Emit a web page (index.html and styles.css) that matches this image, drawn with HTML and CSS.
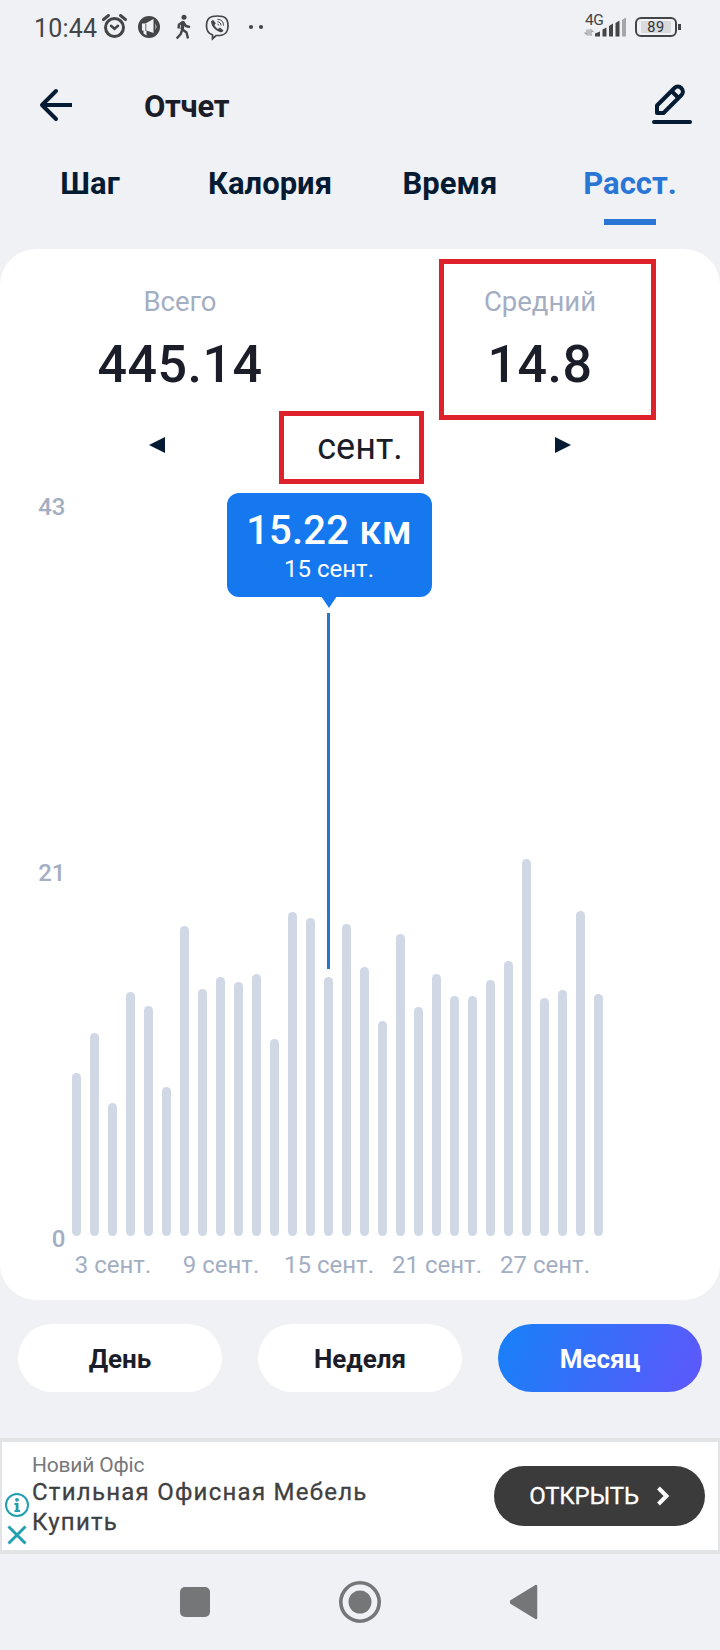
FILE: index.html
```
<!DOCTYPE html>
<html lang="ru">
<head>
  <meta charset="UTF-8" />
  <meta name="viewport" content="width=device-width, initial-scale=1.0"/>
  <title>Отчет</title>
  <link rel="stylesheet" href="styles.css">
</head>
<body>

<div class="status-bar">
  <span class="clock">10:44</span>
  <svg class="status-icons" width="164" height="30" viewBox="100 12 164 30">
    <!-- alarm -->
    <g fill="none" stroke="#434547" stroke-linecap="round">
      <circle cx="114.500" cy="27.500" r="9" stroke-width="3"/>
      <path d="M103.500 19.500l5-4M125.500 19.500l-5-4" stroke-width="3"/>
      <path d="M111 25.800l3.500 3 3.500-3" stroke-width="2.500"/>
    </g>
    <!-- megaphone -->
    <circle cx="149" cy="27" r="11" fill="#434547"/>
    <path d="M142 23.500h3.500l8-4.500v14l-7-2.500v5l-3-2v-3h-1.500zM155.500 23q1.800 3.500 0 7z" fill="#f0f1f5"/>
    <path d="M145.800 24v7" stroke="#434547" stroke-width=".8"/>
    <!-- walking -->
    <circle cx="184" cy="17.200" r="2.500" fill="#434547"/>
    <path d="M183.500 22l-1 7.500 4 3 1.500 6M182.500 29l-1.800 5-4 4.500M178.500 28.500l.5-4 4-2.500 3 4 4 1.200" fill="none" stroke="#434547" stroke-width="2.400" stroke-linejoin="round"/>
    <path d="M183.300 21.500l-1.200 8" stroke="#434547" stroke-width="3.500"/>
    <!-- viber -->
    <path d="M217.500 16c7.500 0 10.500 2.500 10.500 9.800 0 7-3 9.700-10.500 9.700h-1.500l-3.500 3.200v-3.900c-4.500-1.200-6-4-6-9 0-7.300 3.500-9.800 11-9.800z" fill="none" stroke="#434547" stroke-width="1.700"/>
    <path d="M211 21.500l2-1.800 2.800 3.500-1.300 1.800c.8 2 1.800 3 3.600 3.900l1.700-1.300 3.500 2.600c-.4 2-1.700 2.300-3.400 1.700-4.900-1.800-8.200-5.100-8.900-10.400z" fill="#434547"/>
    <path d="M217.500 19.300c4 .2 6 2.500 6 6.300M217.500 21.800c2.300.2 3.500 1.500 3.600 3.700M217.500 24c.8.100 1.200.6 1.300 1.400" fill="none" stroke="#434547"/>
    <circle cx="251" cy="27" r="2.100" fill="#434547"/>
    <circle cx="261" cy="27" r="2.100" fill="#434547"/>
  </svg>
  <div class="signal">
    <span class="network">4G</span>
    <svg width="44" height="24" viewBox="584 15 44 24">
      <path d="M584.500 32.500l2.500 2v-5M593.500 32l-2.500-2v6M589 29.500v6" fill="none" stroke="#a5a6a9" stroke-width="1.400"/>
      <path d="M595 36.500v-3l5-2v5zM602.500 36.500v-7l4-2v9zM609 36.500v-10.500l4-2.500v13zM615.500 36.500v-13.500l4-2.500v16z" fill="#434547"/>
      <path d="M622 36.500v-16.500l4-2.500v19z" fill="#a5a6a9"/>
    </svg>
  </div>
  <div class="battery"><span>89</span></div>
</div>

<header class="header">
  <svg width="34" height="34" viewBox="0 0 34 34" fill="none" stroke="#041b33" stroke-width="4">
    <path d="M3 17h30"/>
    <path d="M17 3L3 17l14 14" stroke-linecap="round" stroke-linejoin="round"/>
  </svg>
  <h1>Отчет</h1>
  <svg class="edit" width="42" height="42" viewBox="651 84 42 42" fill="none" stroke="#041b33" stroke-linejoin="round">
    <path d="M657 113v-7.500l17.500-17.500a4.700 4.700 0 0 1 6.700 0l.3.300a4.700 4.700 0 0 1 0 6.700L663.500 113zM671.500 91l7 7" stroke-width="4"/>
    <path d="M654 122h36" stroke-width="4" stroke-linecap="round"/>
  </svg>
</header>

<nav class="tabs">
  <a>Шаг</a>
  <a>Калория</a>
  <a>Время</a>
  <a class="active">Расст.</a>
</nav>

<main class="card">
  <div class="stats">
    <div class="stat">
      <div class="stat-label">Всего</div>
      <div class="stat-value">445.14</div>
    </div>
    <div class="stat">
      <div class="stat-label">Средний</div>
      <div class="stat-value">14.8</div>
    </div>
  </div>

  <div class="month">
    <svg width="16" height="16" viewBox="0 0 16 16"><path d="M0 8L16 0v16z" fill="#041b33"/></svg>
    <span>сент.</span>
    <svg width="16" height="16" viewBox="0 0 16 16"><path d="M16 8L0 0v16z" fill="#041b33"/></svg>
  </div>

  <div class="chart">
    <div class="y-axis">
      <span>43</span>
      <span>21</span>
      <span>0</span>
    </div>
    <div class="plot">
      <div class="bars" id="bars"></div>
      <div class="marker"></div>
      <div class="tooltip">
        <div class="tooltip-value">15.22 км</div>
        <div class="tooltip-date">15 сент.</div>
      </div>
    </div>
  </div>
  <div class="x-axis">
    <span>3 сент.</span>
    <span>9 сент.</span>
    <span>15 сент.</span>
    <span>21 сент.</span>
    <span>27 сент.</span>
  </div>

  <div class="mark mark-average"></div>
  <div class="mark mark-month"></div>
</main>

<div class="periods">
  <button>День</button>
  <button>Неделя</button>
  <button class="active">Месяц</button>
</div>

<div class="ad">
  <div class="ad-icons">
    <svg width="24" height="24" viewBox="0 0 24 24">
      <circle cx="12" cy="12" r="11" fill="none" stroke="#229fb0" stroke-width="2"/>
      <path d="M9.500 10h4v7h1.500v2h-5.500v-2h1.200v-5h-1.200z" fill="#229fb0"/>
      <circle cx="12" cy="6.800" r="1.900" fill="#229fb0"/>
    </svg>
    <svg width="20" height="20" viewBox="0 0 20 20"><path d="M1.500 1.500l17 17M18.500 1.500l-17 17" stroke="#229fb0" stroke-width="3"/></svg>
  </div>
  <div class="ad-text">
    <div class="ad-brand">Новий Офіс</div>
    <div class="ad-title">Стильная Офисная Мебель<br>Купить</div>
  </div>
  <div class="ad-button">
    <span>ОТКРЫТЬ</span>
    <svg width="14" height="20" viewBox="0 0 14 20"><path d="M2.500 2l8 8-8 8" fill="none" stroke="#fff" stroke-width="4"/></svg>
  </div>
</div>

<div class="navbar">
  <svg width="30" height="30" viewBox="0 0 30 30"><rect width="30" height="30" rx="5" fill="#757678"/></svg>
  <svg width="42" height="42" viewBox="0 0 42 42">
    <circle cx="21" cy="21" r="19.200" fill="none" stroke="#757678" stroke-width="3.600"/>
    <circle cx="21" cy="21" r="11.500" fill="#757678"/>
  </svg>
  <svg width="30" height="36" viewBox="2 0 30 36"><path d="M2 18L28 2v32z" fill="#757678" stroke="#757678" stroke-width="2.500" stroke-linejoin="round"/></svg>
</div>

<script>
  // bar heights in px, one per day
  const days = [
    162.7, 202.7, 133, 244, 230.3, 149, 310, 246.7, 259.3, 254.3,
    261.7, 197, 324, 317.7, 259.3, 312, 268.7, 215.3, 301.7, 229,
    262.3, 240.3, 240.3, 256, 274.7, 376.7, 237.7, 246, 325, 241.7
  ];

  const bars = document.getElementById("bars");
  days.forEach(h => {
    const bar = document.createElement("div");
    bar.className = "bar";
    bar.style.height = h + "px";
    bars.appendChild(bar);
  });
</script>

</body>
</html>
```
FILE: styles.css
```
* {
  box-sizing: border-box;
}

body {
  margin: 0;
  width: 720px;
  height: 1650px;
  font-family: Roboto, "Liberation Sans", sans-serif;
  background: #f0f1f5;
  color: #1b1d29;
  overflow: hidden;
}

svg {
  display: block;
  flex-shrink: 0;
}

.status-bar {
  display: flex;
  align-items: center;
  height: 54px;
  padding-left: 34px;
}

.clock {
  width: 66px;
  font-size: 25px;
  line-height: 30px;
  padding-top: 3px;
  letter-spacing: 0.2px;
  color: #434547;
}

.signal {
  position: relative;
  margin-left: 320px;
}

.network {
  position: absolute;
  left: 1px;
  top: -4px;
  font-size: 15.5px;
  line-height: 18px;
  letter-spacing: -0.5px;
  color: #434547;
}

.battery {
  position: relative;
  width: 42px;
  height: 20px;
  margin-left: 7px;
  padding: 2px 4px;
  border: 2px solid #434547;
  border-radius: 6px;
}

.battery::after {
  content: "";
  position: absolute;
  right: -6px;
  top: 5px;
  width: 3px;
  height: 6px;
  background: #434547;
}

.battery span {
  display: block;
  height: 12px;
  background: #d9dadc;
  font-size: 14.5px;
  line-height: 14px;
  letter-spacing: 0.5px;
  text-align: center;
  color: #333;
}

.header {
  display: flex;
  align-items: center;
  height: 102px;
  padding: 0 27px 0 39px;
}

.header h1 {
  margin: 0 0 0 71px;
  padding-top: 3px;
  font-size: 31px;
  line-height: 40px;
  font-weight: 700;
  letter-spacing: -0.3px;
}

.edit {
  margin-left: auto;
}

.tabs {
  display: grid;
  grid-template-columns: repeat(4, 180px);
  height: 93px;
  padding-top: 8px;
}

.tabs a {
  display: flex;
  flex-direction: column;
  align-items: center;
  font-size: 31px;
  line-height: 40px;
  font-weight: 700;
  color: #041b33;
}

.tabs .active {
  color: #2a76d6;
}

.tabs .active::after {
  content: "";
  width: 52px;
  height: 6px;
  margin-top: 15px;
  background: #2a76d6;
}

.card {
  position: relative;
  height: 1051px;
  padding-top: 35px;
  background: #fff;
  border-radius: 36px;
}

.stats {
  display: grid;
  grid-template-columns: 1fr 1fr;
  text-align: center;
}

.stat-label {
  font-size: 27.5px;
  line-height: 36px;
  color: #a3aec3;
}

.stat-value {
  margin-top: 17px;
  font-size: 52px;
  line-height: 56px;
  font-weight: 500;
  letter-spacing: 0.5px;
}

.month {
  display: flex;
  align-items: center;
  justify-content: space-between;
  height: 46px;
  margin-top: 31px;
  padding: 0 149px;
  font-size: 36px;
}

.month svg {
  margin-bottom: 4px;
}

.chart {
  display: flex;
  height: 756px;
  margin-top: 24px;
}

.y-axis {
  display: flex;
  flex-direction: column;
  justify-content: space-between;
  width: 65.500px;
  padding-top: 1px;
  margin-bottom: -1px;
  font-size: 24px;
  line-height: 24px;
  font-weight: 500;
  text-align: right;
  color: #a3aec3;
}

.plot {
  position: relative;
  height: 742px;
  margin-left: 6.500px;
}

.bars {
  display: flex;
  align-items: flex-end;
  gap: 9px;
  height: 100%;
}

.bar {
  width: 9px;
  border-radius: 5px;
  background: #d0d7e5;
}

.marker {
  position: absolute;
  left: 255px;
  top: 119px;
  width: 3px;
  height: 356px;
  background: #2a76c6;
}

.tooltip {
  position: absolute;
  left: 154.500px;
  top: -1px;
  width: 205px;
  height: 104px;
  padding-top: 15px;
  border-radius: 12px;
  background: #1578ef;
  color: #fff;
  text-align: center;
}

.tooltip::after {
  content: "";
  position: absolute;
  left: 94px;
  top: 103px;
  border: 8px solid transparent;
  border-top: 12px solid #1578ef;
  border-bottom: 0;
}

.tooltip-value {
  font-size: 40px;
  line-height: 46px;
  font-weight: 500;
  letter-spacing: 0.2px;
}

.tooltip-date {
  font-size: 24px;
  line-height: 30px;
}

.x-axis {
  display: flex;
  padding: 1px 0 0 59px;
}

.x-axis span {
  width: 108px;
  font-size: 24px;
  line-height: 28px;
  text-align: center;
  color: #a3aec3;
}

.mark {
  position: absolute;
  border: 5px solid #de222c;
}

.mark-average {
  left: 439px;
  top: 10px;
  width: 217px;
  height: 161px;
}

.mark-month {
  left: 279px;
  top: 162px;
  width: 145px;
  height: 73px;
}

.periods {
  display: grid;
  grid-template-columns: repeat(3, 1fr);
  gap: 36px;
  padding: 24px 18px 46px;
}

.periods button {
  height: 68px;
  border: none;
  border-radius: 34px;
  background: #fff;
  font-family: inherit;
  font-size: 26px;
  font-weight: 700;
  color: #1b1d29;
  padding: 2px 0 0;
}

.periods .active {
  background: linear-gradient(110deg, #1a7ff8 5%, #5b59fb 95%);
  color: #fff;
}

.ad {
  display: flex;
  height: 116px;
  border: solid #e2e4e6;
  border-width: 4px 2px;
  background: #fff;
}

.ad-icons {
  display: flex;
  flex-direction: column;
  align-items: center;
  gap: 8px;
  width: 30px;
  padding-top: 51px;
}

.ad-text {
  padding-top: 11px;
  width: 462px;
}

.ad-brand {
  font-size: 21px;
  line-height: 24px;
  letter-spacing: -0.2px;
  color: #77787a;
}

.ad-title {
  font-size: 24px;
  line-height: 30px;
  letter-spacing: 1.25px;
  -webkit-text-stroke: 0.3px #3f4042;
  color: #3f4042;
}

.ad-button {
  display: flex;
  align-items: center;
  justify-content: center;
  gap: 17px;
  width: 211px;
  height: 60px;
  margin-top: 24px;
  border-radius: 30px;
  background: #3b3b3b;
  color: #fff;
  font-size: 24px;
}

.ad-button span {
  letter-spacing: -0.2px;
  -webkit-text-stroke: 0.3px #fff;
}

.navbar {
  display: flex;
  align-items: center;
  height: 96px;
  padding-left: 180px;
  gap: 129px;
}
```
